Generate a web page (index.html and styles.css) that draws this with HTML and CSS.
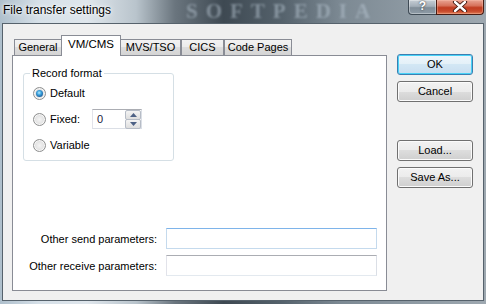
FILE: index.html
```html
<!DOCTYPE html>
<html>
<head>
<meta charset="utf-8">
<link rel="stylesheet" href="styles.css">
</head>
<body>
<div class="window">
  <div class="titlebar">
    <span class="title">File transfer settings</span>
    <span class="watermark">SOFTPEDIA</span>
    <div class="caption-btns">
      <div class="cap-help">?</div>
      <div class="cap-close">
        <svg width="16" height="11" viewBox="0 0 16 11">
          <path d="M3 1 L13 10 M13 1 L3 10" stroke="#3a1208" stroke-width="4.2" stroke-linecap="round" fill="none"/>
          <path d="M3 1 L13 10 M13 1 L3 10" stroke="#ffffff" stroke-width="2.4" stroke-linecap="round" fill="none"/>
        </svg>
      </div>
    </div>
  </div>
  <div class="client">
    <div class="main">
      <div class="tabs">
        <div class="tab t-general">General</div>
        <div class="tab tab-active t-vm">VM/CMS</div>
        <div class="tab t-mvs">MVS/TSO</div>
        <div class="tab t-cics">CICS</div>
        <div class="tab t-code">Code Pages</div>
      </div>
      <div class="panel">
        <fieldset class="group">
          <legend>Record format</legend>
          <div class="opt"><span class="radio checked"></span><span>Default</span></div>
          <div class="opt"><span class="radio"></span><span class="fixed-label">Fixed:</span>
            <div class="spin">
              <span class="spin-val">0</span>
              <div class="spin-btns">
                <div class="spin-btn"><svg width="7" height="4" viewBox="0 0 7 4"><path d="M0 4 L3.5 0 L7 4 Z" fill="#4d6185"/></svg></div>
                <div class="spin-btn"><svg width="7" height="4" viewBox="0 0 7 4"><path d="M0 0 L3.5 4 L7 0 Z" fill="#4d6185"/></svg></div>
              </div>
            </div>
          </div>
          <div class="opt"><span class="radio"></span><span>Variable</span></div>
        </fieldset>
        <div class="params">
          <div class="param-row"><span class="param-label">Other send parameters:</span><div class="textbox textbox-hover"></div></div>
          <div class="param-row"><span class="param-label">Other receive parameters:</span><div class="textbox"></div></div>
        </div>
      </div>
    </div>
    <div class="side">
      <div class="btn btn-default">OK</div>
      <div class="btn">Cancel</div>
      <div class="btn btn-gap">Load...</div>
      <div class="btn">Save As...</div>
    </div>
  </div>
</div>
</body>
</html>
```
FILE: styles.css
```css
html, body {
  margin: 0;
  padding: 0;
}
body {
  width: 486px;
  height: 304px;
  overflow: hidden;
  font-family: "Liberation Sans", Arial, sans-serif;
  font-size: 11px;
  color: #000;
}
.window {
  width: 486px;
  height: 304px;
  box-sizing: border-box;
  display: flex;
  flex-direction: column;
  background: linear-gradient(90deg, #aebfcc 0%, #d6e0e8 8%, #dfe6ec 18%, #b9c4cc 28%, #6a757e 36%, #3e4952 46%, #55626c 58%, #7c8993 70%, #8e9aa3 85%, #9ea8b0 100%);
  position: relative;
}
.titlebar {
  height: 23px;
  display: flex;
  align-items: flex-start;
  position: relative;
}
.title {
  font-family: "Liberation Sans", Arial, sans-serif;
  font-size: 12px;
  margin-left: 3px;
  margin-top: 3px;
  line-height: 15px;
  color: #000;
  text-shadow: 0 0 6px #fff, 0 0 3px #fff;
}
.watermark {
  position: absolute;
  left: 186px;
  top: 0;
  height: 23px;
  font-family: "Liberation Serif", serif;
  font-weight: bold;
  font-size: 21px;
  line-height: 23px;
  letter-spacing: 8px;
  color: rgba(185, 200, 212, 0.5);
  filter: blur(1px);
}
.caption-btns {
  margin-left: auto;
  margin-right: 2px;
  display: flex;
  position: relative;
  z-index: 1;
}
.cap-help {
  width: 28px;
  height: 15px;
  box-sizing: border-box;
  border: 1px solid #3f4b55;
  border-top: none;
  border-right: none;
  border-radius: 0 0 0 4px;
  background: linear-gradient(#c6ced5 0%, #a3aeb8 45%, #808d98 55%, #8e9ba6 100%);
  box-shadow: inset 0 0 0 1px rgba(255,255,255,0.35);
  color: #fff;
  font-weight: bold;
  font-size: 12px;
  line-height: 13px;
  text-align: center;
  text-shadow: 0 0 2px #222;
}
.cap-close {
  width: 48px;
  height: 15px;
  box-sizing: border-box;
  border: 1px solid #4a1c12;
  border-top: none;
  border-radius: 0 0 4px 0;
  background: linear-gradient(#e9a493 0%, #d7735c 40%, #c13d21 55%, #c84a2c 80%, #e07d55 100%);
  box-shadow: inset 0 0 0 1px rgba(255,200,180,0.35);
  display: flex;
  align-items: center;
  justify-content: center;
}
.cap-close svg {
  margin-top: -1px;
}
.client {
  margin: 0 2px 3px 2px;
  flex: 1;
  border: 1px solid #56626c;
  background: #f0f0f0;
  display: flex;
  align-items: flex-start;
  padding: 11px 0 0 9px;
}
.main {
  display: flex;
  flex-direction: column;
  width: 375px;
}
.tabs {
  display: flex;
  align-items: flex-end;
  padding-left: 2px;
  height: 20px;
}
.tab {
  height: 16px;
  box-sizing: border-box;
  border: 1px solid #898c95;
  border-bottom: none;
  margin-right: -1px;
  background: linear-gradient(#f2f2f2 0%, #ebebeb 50%, #dddddd 50%, #d4d4d4 100%);
  text-align: center;
  line-height: 15px;
  color: #000;
}
.tab-active {
  height: 21px;
  margin-bottom: -1px;
  background: #fff;
  position: relative;
  z-index: 1;
  line-height: 17px;
  font-size: 11.5px;
}
.t-general { width: 48px; }
.t-vm { width: 60px; margin-right: -1px; }
.t-mvs { width: 61px; }
.t-cics { width: 43px; margin-left: 1px; }
.t-code { width: 68px; margin-left: 1px; }
.panel {
  height: 236px;
  box-sizing: border-box;
  border: 1px solid #898c95;
  background: #fff;
  display: flex;
  flex-direction: column;
  padding: 0 9px 14px 10px;
}
.group {
  margin: 11px 0 0 0;
  width: 151px;
  height: 94px;
  box-sizing: border-box;
  border: 1px solid #d5dfe5;
  border-radius: 3px;
  padding: 0 0 0 9px;
  min-width: 0;
}
.group legend {
  padding: 0 2px;
  margin-left: -3px;
  line-height: 13px;
  font-size: 11px;
}
.opt {
  height: 26px;
  display: flex;
  align-items: center;
}
.radio {
  width: 13px;
  height: 13px;
  box-sizing: border-box;
  border-radius: 50%;
  border: 1px solid #8e8f8f;
  background: radial-gradient(circle at 50% 50%, #f4f4f4 0%, #e6e6e6 45%, #cfcfcf 100%);
  box-shadow: inset 0 0 0 1px #f8f8f8;
  margin-right: 4px;
  position: relative;
  flex: none;
}
.radio.checked::after {
  content: "";
  position: absolute;
  left: 2px;
  top: 2px;
  width: 7px;
  height: 7px;
  border-radius: 50%;
  background: radial-gradient(circle at 45% 40%, #b9ecff 0%, #3fa6e0 35%, #1a5d9c 75%, #103f72 100%);
}
.fixed-label {
  width: 42px;
}
.spin {
  width: 50px;
  height: 20px;
  box-sizing: border-box;
  border: 1px solid #dbdfe6;
  border-top-color: #abadb3;
  border-left-color: #e2e3ea;
  background: #fff;
  display: flex;
  align-items: center;
  padding-left: 4px;
}
.spin-val {
  flex: 1;
  color: #1a1a40;
}
.spin-btns {
  display: flex;
  flex-direction: column;
  width: 16px;
  height: 18px;
}
.spin-btn {
  flex: 1;
  box-sizing: border-box;
  border: 1px solid #b6bcc6;
  margin-bottom: -1px;
  background: linear-gradient(#f4f4f4, #dedede);
  display: flex;
  align-items: center;
  justify-content: center;
  border-radius: 2px;
}
.params {
  margin-top: auto;
  display: flex;
  flex-direction: column;
  gap: 6px;
}
.param-row {
  display: flex;
  justify-content: flex-end;
  align-items: center;
  gap: 9px;
}
.textbox {
  width: 211px;
  height: 21px;
  box-sizing: border-box;
  border: 1px solid #e3e9ef;
  border-top-color: #abadb3;
  border-left-color: #e2e3ea;
  border-right-color: #dbdfe6;
  background: #fff;
}
.textbox-hover {
  border-color: #c5daed;
  border-top-color: #7eb4ea;
}
.side {
  display: flex;
  flex-direction: column;
  margin-left: 10px;
  margin-top: 19px;
  gap: 6px;
}
.btn {
  width: 76px;
  height: 21px;
  box-sizing: border-box;
  border: 1px solid #707070;
  border-radius: 3px;
  background: linear-gradient(#f2f2f2 0%, #ebebeb 50%, #dddddd 50%, #cfcfcf 100%);
  box-shadow: inset 0 0 0 1px #fbfbfb;
  text-align: center;
  line-height: 19px;
  color: #000;
}
.btn-default {
  border-color: #3c7fb1;
  box-shadow: inset 0 0 0 1px #48d2f7;
  background: linear-gradient(#eef6fb 0%, #e3f0f8 50%, #d2e7f4 50%, #c9def0 100%);
}
.btn-gap {
  margin-top: 32px;
}
```
